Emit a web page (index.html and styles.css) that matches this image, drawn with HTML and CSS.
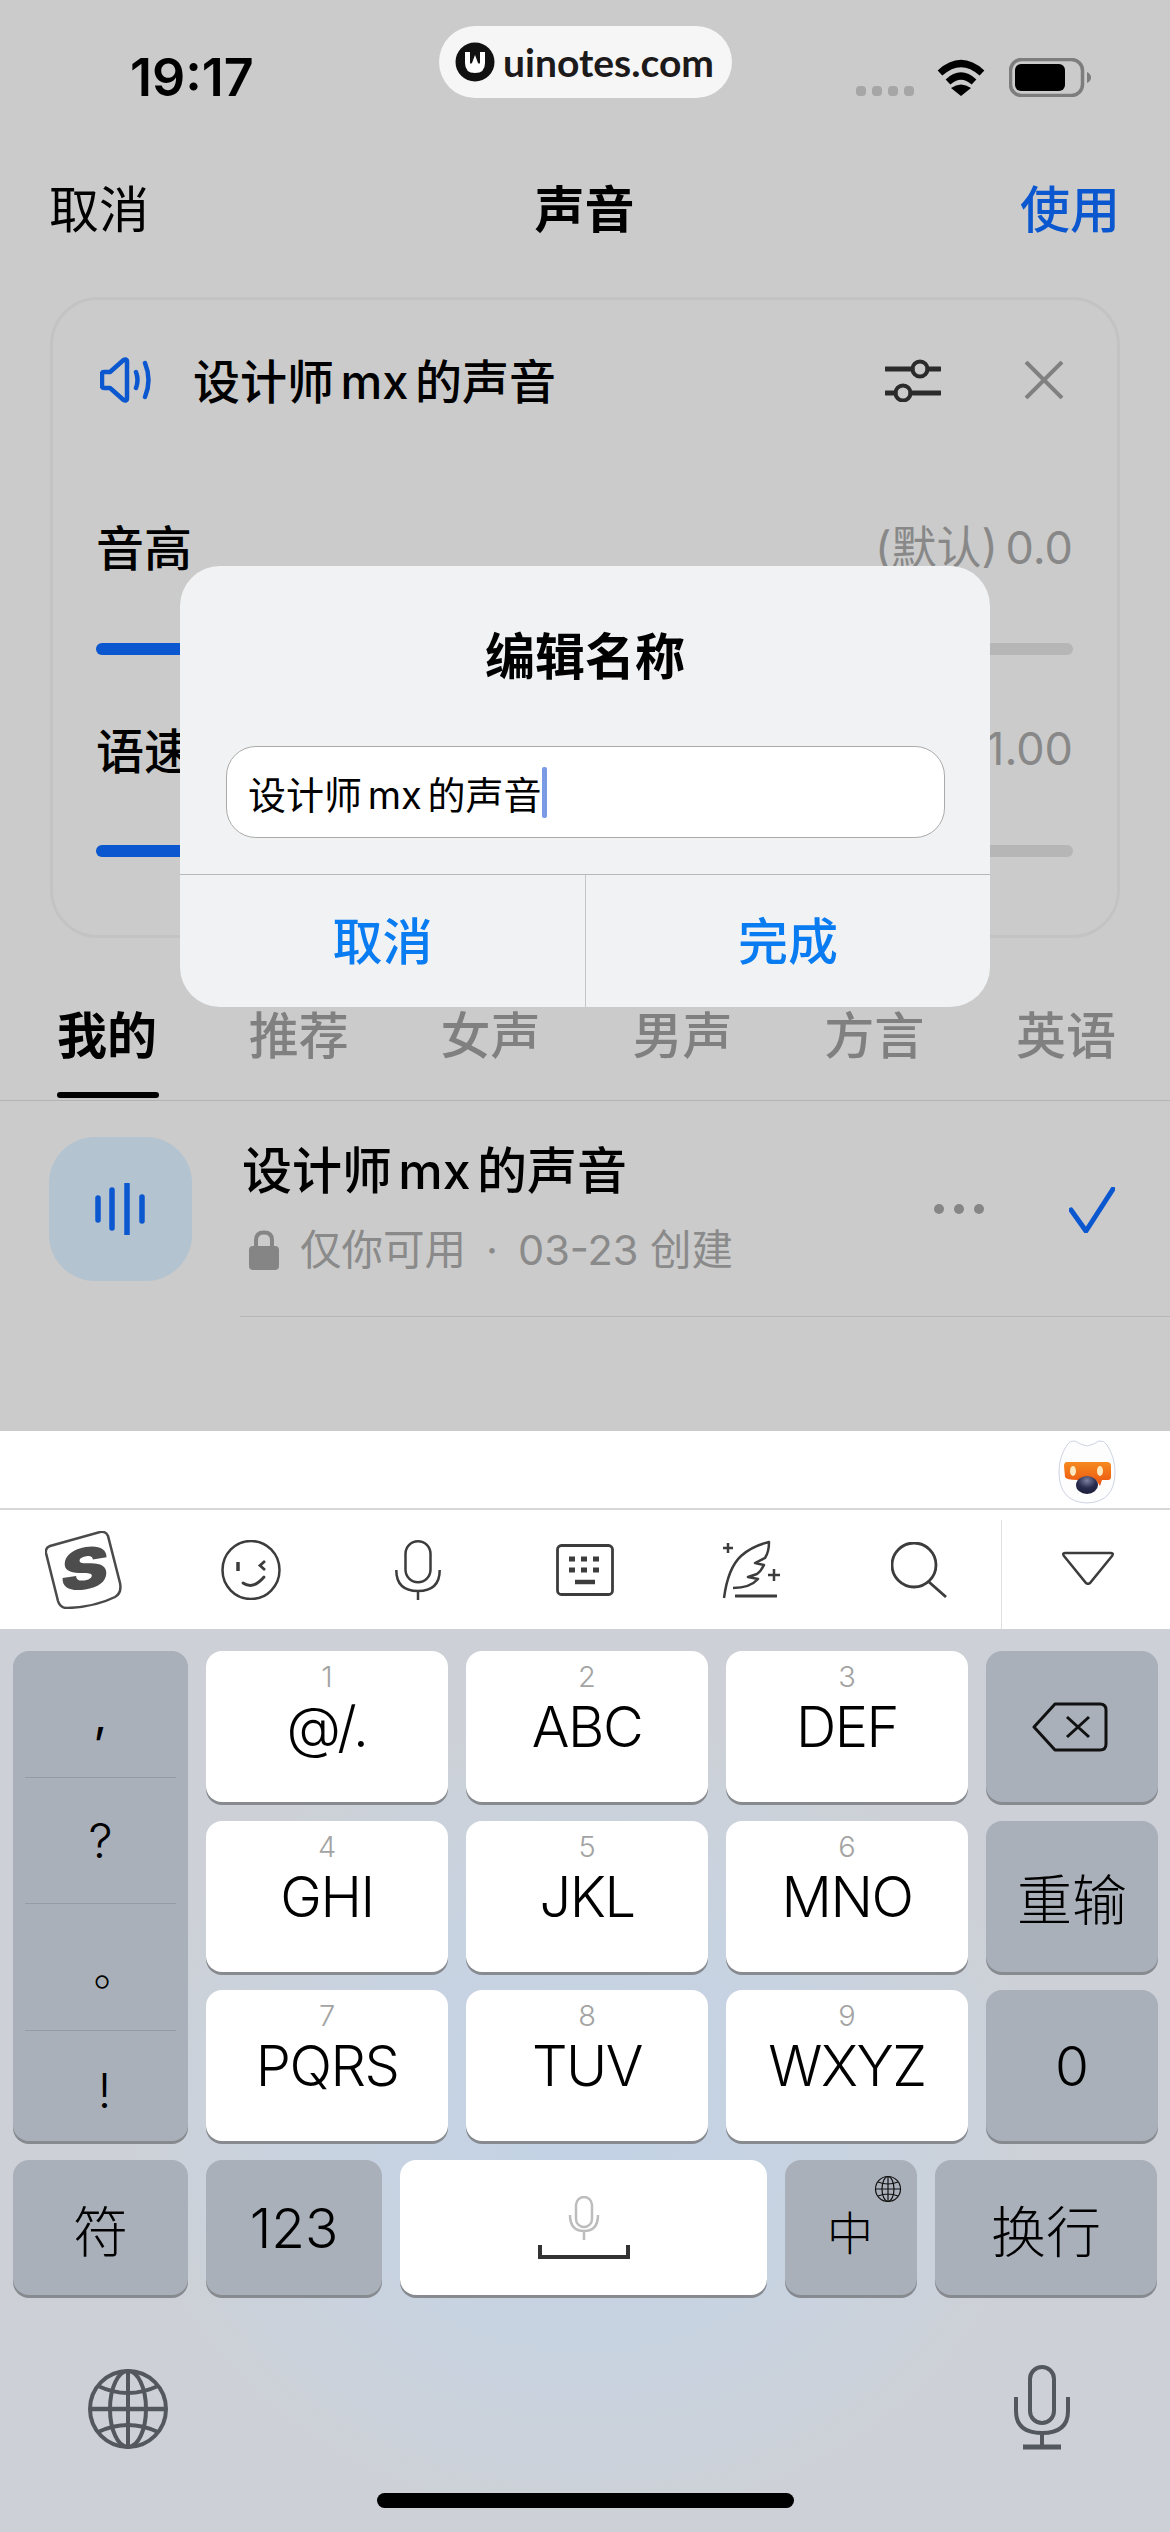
FILE: index.html
```html
<!DOCTYPE html>
<html lang="zh-CN">
<head>
    <meta charset="UTF-8">
    <meta name="viewport" content="width=device-width, initial-scale=1.0">
    <title>声音</title>
    <link rel="stylesheet" href="styles.css">
</head>
<body>
<div class="screen">

    <!-- Watermark pill -->
    <div class="pill">
        <svg class="pill-logo" viewBox="0 0 40 40">
            <circle cx="20" cy="20" r="19.5" fill="#111"/>
            <path d="M10 10 H15 V20 Q15 23 17 21 L20 13 L23 21 Q25 23 25 20 V10 H30 V21 Q30 31 20 31 Q10 31 10 21 Z" fill="#fff"/>
        </svg>
        <span class="pill-text">uinotes.com</span>
    </div>

    <!-- Status bar -->
    <div class="status">
        <span class="time">19:17</span>
        <div class="status-icons">
            <div class="signal"><i></i><i></i><i></i><i></i></div>
            <svg class="wifi" viewBox="0 0 50 37">
                <path d="M4 14 Q25 -5 46 14" fill="none" stroke="#000" stroke-width="7"/>
                <path d="M12 23 Q25 11 38 23" fill="none" stroke="#000" stroke-width="7"/>
                <path d="M25 37 L15 29 Q25 22 35 29 Z" fill="#000"/>
            </svg>
            <svg class="battery" viewBox="0 0 82 39">
                <rect x="1.5" y="1.5" width="72" height="36" rx="11" fill="none" stroke="#7d7d7d" stroke-width="3.5"/>
                <rect x="6" y="6" width="50" height="27" rx="6" fill="#000"/>
                <path d="M78 14 Q82 16 82 19.5 Q82 23 78 25 Z" fill="#7d7d7d"/>
            </svg>
        </div>
    </div>

    <!-- Nav bar -->
    <div class="nav">
        <span>取消</span>
        <span class="nav-title">声音</span>
        <span class="nav-use">使用</span>
    </div>

    <!-- Current voice card -->
    <div class="voice-card">
        <div class="card-head">
            <svg class="icon-speaker" viewBox="0 0 52 46">
                <path d="M4 15 H10 L23 3.5 Q27 1 27 5 V41 Q27 45 23 42.5 L10 31 H4 Q2 31 2 29 V17 Q2 15 4 15 Z" fill="none" stroke="#0b57cf" stroke-width="4.5" stroke-linejoin="round"/>
                <path d="M36 15 Q39 23 36 31 M45 6 Q52 23 45 40" fill="none" stroke="#0b57cf" stroke-width="4.5" stroke-linecap="round"/>
            </svg>
            <span class="card-name">设计师 mx 的声音</span>
            <svg class="icon-tune" viewBox="0 0 56 44">
                <path d="M1 11 H27 M43 11 H55 M1 35 H10 M26 35 H55" stroke="#2b2b2b" stroke-width="5" stroke-linecap="round"/>
                <circle cx="35" cy="11" r="7.5" fill="none" stroke="#2b2b2b" stroke-width="4"/>
                <circle cx="18" cy="35" r="7.5" fill="none" stroke="#2b2b2b" stroke-width="4"/>
            </svg>
            <svg class="icon-close" viewBox="0 0 40 38">
                <path d="M2 1 L38 37 M38 1 L2 37" stroke="#808080" stroke-width="4"/>
            </svg>
        </div>
        <div class="param param-first">
            <span>音高</span>
            <span class="param-value">(默认) 0.0</span>
        </div>
        <div class="track"><div class="track-fill"></div></div>
        <div class="param">
            <span>语速</span>
            <span class="param-value">1.00</span>
        </div>
        <div class="track"><div class="track-fill"></div></div>
    </div>

    <!-- Tabs -->
    <div class="tabs">
        <span class="tab tab-active">我的</span>
        <span class="tab">推荐</span>
        <span class="tab">女声</span>
        <span class="tab">男声</span>
        <span class="tab">方言</span>
        <span class="tab">英语</span>
    </div>

    <!-- Voice list -->
    <div class="voice-row">
        <div class="voice-thumb">
            <svg class="icon-wave" viewBox="0 0 52 52">
                <path d="M3 15 V37 M17 7 V45 M32 1 V51 M47 14 V38" stroke="#0b57cf" stroke-width="5.5" stroke-linecap="round"/>
            </svg>
        </div>
        <div class="voice-info">
            <div class="voice-name">设计师 mx 的声音</div>
            <div class="voice-sub">
                <svg class="icon-lock" viewBox="0 0 30 40">
                    <path d="M7 18 V10 Q7 2.500 15 2.500 Q23 2.500 23 10 V18" fill="none" stroke="#858585" stroke-width="4"/>
                    <rect x="0" y="16" width="30" height="24" rx="4" fill="#858585"/>
                </svg>
                <span>仅你可用<span class="sub-dot">·</span>03-23 创建</span>
            </div>
        </div>
        <div class="voice-more"><i></i><i></i><i></i></div>
        <svg class="icon-check" viewBox="0 0 46 46">
            <path d="M2 23 L17 44 L44 2" fill="none" stroke="#0b57cf" stroke-width="5" stroke-linecap="round" stroke-linejoin="round"/>
        </svg>
    </div>
    <div class="row-line"></div>

    <!-- Keyboard -->
    <div class="keyboard">
        <div class="kb-top">
            <svg class="mascot" viewBox="0 0 58 64">
                <defs>
                    <linearGradient id="band" x1="0" y1="0" x2="0" y2="1">
                        <stop offset="0" stop-color="#f58a1f"/>
                        <stop offset="1" stop-color="#ec5310"/>
                    </linearGradient>
                    <radialGradient id="nose" cx="0.5" cy="0.25" r="0.7">
                        <stop offset="0" stop-color="#7d80a0"/>
                        <stop offset="0.6" stop-color="#2a2c4e"/>
                        <stop offset="1" stop-color="#1d1f3c"/>
                    </radialGradient>
                </defs>
                <path d="M29 6 Q35 5 41 1 Q46 0 49 5 Q57 17 57 32 Q57 62 29 63 Q1 62 1 32 Q1 17 9 5 Q12 0 17 1 Q23 5 29 6 Z" fill="#fdfdfe" stroke="#cfd4e2" stroke-width="1"/>
                <path d="M9 22 H49 Q53 22 53 26 V37 Q53 40 50 40 L44 40 L42 46 L38 40 H20 Q8 40 7 37 L6 26 Q6 22 9 22 Z" fill="url(#band)"/>
                <ellipse cx="15" cy="31" rx="3" ry="5" fill="#fde9c0"/>
                <ellipse cx="42" cy="31" rx="3" ry="5" fill="#fde9c0"/>
                <ellipse cx="29" cy="45" rx="11" ry="9" fill="url(#nose)"/>
            </svg>
        </div>
        <div class="kb-tools">
            <div class="tool">
                <svg class="tool-s" viewBox="0 0 78 78">
                    <path d="M5 15 L55 1 Q61 0 63 5 L75 52 Q77 62 70 66 Q50 76 22 77 Q15 77 13 70 L1 22 Q0 17 5 15 Z" fill="#fff" stroke="#4a4a4a" stroke-width="2.500"/>
                    <text class="tool-s-letter" transform="rotate(-9 39 39) translate(39 58) scale(1.3 1)">S</text>
                </svg>
            </div>
            <div class="tool">
                <svg class="tool-icon" viewBox="0 0 60 60">
                    <ellipse cx="30" cy="30" rx="28.500" ry="29" fill="none" stroke="#3c3c3c" stroke-width="2.500"/>
                    <path d="M17 22 V31" stroke="#3c3c3c" stroke-width="3.500"/>
                    <path d="M44 21 L39 25.500 L44 30" fill="none" stroke="#3c3c3c" stroke-width="2.800"/>
                    <path d="M22 43 Q32 50 43 37" fill="none" stroke="#3c3c3c" stroke-width="2.800" stroke-linecap="round"/>
                </svg>
            </div>
            <div class="tool">
                <svg class="tool-mic" viewBox="0 0 46 60">
                    <rect x="10.500" y="1.300" width="25" height="41" rx="12.500" fill="none" stroke="#3c3c3c" stroke-width="2.500"/>
                    <path d="M1.300 30 Q1.300 51 23 51 Q44.700 51 44.700 30 M23 51 V60" fill="none" stroke="#3c3c3c" stroke-width="2.500"/>
                </svg>
            </div>
            <div class="tool">
                <svg class="tool-kb" viewBox="0 0 58 52">
                    <rect x="1.500" y="1.500" width="55" height="49" rx="4" fill="none" stroke="#3c3c3c" stroke-width="2.800"/>
                    <path d="M13 15 H19 M25 15 H31 M37 15 H43 M13 26 H19 M25 26 H31 M37 26 H43" stroke="#3c3c3c" stroke-width="5"/>
                    <path d="M19 38 H39" stroke="#3c3c3c" stroke-width="4.500"/>
                </svg>
            </div>
            <div class="tool">
                <svg class="tool-icon" viewBox="0 0 60 60">
                    <path d="M2 58 Q6 28 19 16 Q30 6 47 2 Q47 12 43 18 L33 23 L42 25 Q39 31 35 34 L26 37 L36 39 Q28 48 11 48" fill="none" stroke="#3c3c3c" stroke-width="2.500" stroke-linejoin="round"/>
                    <path d="M6 3 V13 M1 8 H11 M52 29 V41 M46 35 H58" stroke="#3c3c3c" stroke-width="2.500"/>
                    <path d="M13 56 H55" stroke="#3c3c3c" stroke-width="2.800"/>
                </svg>
            </div>
            <div class="tool">
                <svg class="tool-search" viewBox="0 0 56 56">
                    <circle cx="23" cy="23" r="22" fill="none" stroke="#3c3c3c" stroke-width="2.800"/>
                    <path d="M38 40 L55 55" stroke="#3c3c3c" stroke-width="2.800"/>
                </svg>
            </div>
            <div class="tool tool-last">
                <svg class="tool-down" viewBox="0 0 54 34">
                    <path d="M4 2 H50 Q53 2 51 5 L29 32 Q27 33.500 25 32 L3 5 Q1 2 4 2 Z" fill="none" stroke="#3c3c3c" stroke-width="2.500"/>
                </svg>
            </div>
        </div>

        <div class="kb-keys">
            <div class="key key-gray key-punct">
                <span class="punct punct-comma">,</span>
                <span class="punct">?</span>
                <span class="punct punct-stop">。</span>
                <span class="punct punct-bang">!</span>
            </div>
            <div class="key"><span class="key-num">1</span><span class="key-label">@/.</span></div>
            <div class="key"><span class="key-num">2</span><span class="key-label">ABC</span></div>
            <div class="key"><span class="key-num">3</span><span class="key-label">DEF</span></div>
            <div class="key key-gray key-center">
                <svg class="icon-back" viewBox="0 0 76 50">
                    <path d="M23 2 H68 Q74 2 74 8 V42 Q74 48 68 48 H23 L2 25 Z" fill="none" stroke="#111" stroke-width="3" stroke-linejoin="round"/>
                    <path d="M35 15 L57 35 M57 15 L35 35" stroke="#111" stroke-width="3"/>
                </svg>
            </div>
            <div class="key"><span class="key-num">4</span><span class="key-label">GHI</span></div>
            <div class="key"><span class="key-num">5</span><span class="key-label">JKL</span></div>
            <div class="key"><span class="key-num">6</span><span class="key-label">MNO</span></div>
            <div class="key key-gray key-center key-text">重输</div>
            <div class="key"><span class="key-num">7</span><span class="key-label">PQRS</span></div>
            <div class="key"><span class="key-num">8</span><span class="key-label">TUV</span></div>
            <div class="key"><span class="key-num">9</span><span class="key-label">WXYZ</span></div>
            <div class="key key-gray key-center key-text">0</div>
        </div>

        <div class="kb-bottom">
            <div class="key key-gray key-center key-text w-sym">符</div>
            <div class="key key-gray key-center key-text w-num">123</div>
            <div class="key key-center w-space">
                <svg class="space-mic" viewBox="0 0 32 44">
                    <rect x="8" y="1" width="16" height="30" rx="8" fill="none" stroke="#bdbdbd" stroke-width="2.500"/>
                    <path d="M2 19 Q2 35 16 35 Q30 35 30 19 M16 35 V44" fill="none" stroke="#bdbdbd" stroke-width="2.500"/>
                </svg>
                <svg class="space-bar" viewBox="0 0 92 14">
                    <path d="M2 0 V12 H90 V0" fill="none" stroke="#333" stroke-width="4"/>
                </svg>
            </div>
            <div class="key key-gray key-center key-zh w-zh">
                <svg class="zh-globe" viewBox="0 0 28 28">
                    <circle cx="14" cy="14" r="12.500" fill="none" stroke="#111" stroke-width="1.200"/>
                    <ellipse cx="14" cy="14" rx="6" ry="12.500" fill="none" stroke="#111" stroke-width="1.200"/>
                    <path d="M14 1.500 V26.500 M1.500 14 H26.500 M4 7 Q14 11 24 7 M4 21 Q14 17 24 21" fill="none" stroke="#111" stroke-width="1.200"/>
                </svg>
                <span>中</span>
            </div>
            <div class="key key-gray key-center key-text w-ret">换行</div>
        </div>

        <div class="kb-system">
            <svg class="sys-globe" viewBox="0 0 80 80">
                <circle cx="40" cy="40" r="38" fill="none" stroke="#53585f" stroke-width="4"/>
                <ellipse cx="40" cy="40" rx="18" ry="38" fill="none" stroke="#53585f" stroke-width="4"/>
                <path d="M40 2 V78" stroke="#53585f" stroke-width="4"/>
                <path d="M2 40 H78" stroke="#53585f" stroke-width="4.500"/>
                <path d="M10 17 Q40 31 70 17 M10 63 Q40 49 70 63" fill="none" stroke="#53585f" stroke-width="4"/>
            </svg>
            <svg class="sys-mic" viewBox="0 0 56 85">
                <rect x="16" y="2" width="24" height="56" rx="12" fill="none" stroke="#53585f" stroke-width="4"/>
                <path d="M2 32 V46 Q2 68 28 68 Q54 68 54 46 V32 M28 68 V80" fill="none" stroke="#53585f" stroke-width="4"/>
                <path d="M9 82 H47" stroke="#53585f" stroke-width="5"/>
            </svg>
        </div>
        <div class="home-bar"></div>
    </div>

    <!-- Edit name dialog -->
    <div class="dialog">
        <div class="dialog-title">编辑名称</div>
        <div class="dialog-input"><span>设计师 mx 的声音</span><i class="caret"></i></div>
        <div class="dialog-actions">
            <span>取消</span>
            <span>完成</span>
        </div>
    </div>
</div>
</body>
</html>
```
FILE: styles.css
```css
* {
    box-sizing: border-box;
}

body {
    margin: 0;
    font-family: Inter, "Noto Sans CJK SC", sans-serif;
    color: #000;
}

.screen {
    position: relative;
    width: 1170px;
    height: 2532px;
    overflow: hidden;
    display: flex;
    flex-direction: column;
    background-color: #cbcbcb;
}

/* watermark */
.pill {
    position: absolute;
    left: 439px;
    top: 26px;
    width: 293px;
    height: 72px;
    padding-left: 16px;
    display: flex;
    align-items: center;
    gap: 8px;
    border-radius: 36px;
    background-color: #f6f6f6;
}

.pill-logo {
    width: 40px;
    height: 40px;
}

.pill-text {
    font-family: Lato, sans-serif;
    font-size: 39px;
    font-weight: 700;
    color: #1c1a1a;
}

/* status bar */
.status {
    height: 160px;
    padding: 54px 79px 0 130px;
    display: flex;
    justify-content: space-between;
    align-items: flex-start;
}

.time {
    font-size: 52px;
    font-weight: 600;
    line-height: 48px;
}

.status-icons {
    display: flex;
    align-items: flex-start;
    margin-top: 4px;
}

.signal {
    display: flex;
    gap: 6px;
    margin-top: 28px;
    margin-right: 22px;
}

.signal i {
    width: 10px;
    height: 10px;
    border-radius: 4px;
    background-color: #a6a6a6;
}

.wifi {
    width: 50px;
    height: 37px;
    margin-top: 1px;
    margin-right: 23px;
}

.battery {
    width: 82px;
    height: 39px;
}

/* nav */
.nav {
    height: 96px;
    padding: 0 50px 5px 49px;
    display: flex;
    justify-content: space-between;
    align-items: center;
    font-size: 50px;
}

.nav-title {
    font-weight: 700;
}

.nav-use {
    color: #0b57cf;
    font-weight: 500;
}

/* voice card */
.voice-card {
    height: 641px;
    margin: 41px 50px 0;
    padding: 56px 44px 0 43px;
    border: 3px solid #c3c3c3;
    border-radius: 48px;
}

.card-head {
    height: 48px;
    display: flex;
    align-items: center;
}

.icon-speaker {
    width: 52px;
    height: 46px;
    margin-left: 4px;
    margin-right: 41px;
}

.card-name {
    flex: 1;
    margin-top: -3px;
    font-size: 47px;
    font-weight: 500;
    word-spacing: -6px;
}

.icon-tune {
    width: 56px;
    height: 44px;
    margin-right: 83px;
}

.icon-close {
    width: 40px;
    height: 38px;
    margin-right: 9px;
}

.param {
    height: 48px;
    margin-top: 70px;
    padding-bottom: 2px;
    display: flex;
    justify-content: space-between;
    align-items: center;
    font-size: 48px;
    font-weight: 500;
}

.param-first {
    margin-top: 119px;
    padding-bottom: 5px;
}

.param-value {
    font-size: 45px;
    font-weight: 400;
    word-spacing: -5px;
    color: #888;
}

.track {
    height: 12px;
    margin-top: 72px;
    border-radius: 6px;
    background-color: #b6b6b6;
}

.track-fill {
    width: 40%;
    height: 100%;
    border-radius: 6px;
    background-color: #0b57cf;
}

/* tabs */
.tabs {
    height: 163px;
    padding: 74px 54px 0 57px;
    display: flex;
    justify-content: space-between;
    align-items: flex-start;
    border-bottom: 1px solid #b4b4b4;
}

.tab {
    position: relative;
    font-size: 50px;
    line-height: 48px;
    font-weight: 500;
    color: #808080;
}

.tab-active {
    font-weight: 700;
    color: #000;
}

.tab-active::after {
    content: "";
    position: absolute;
    left: 0;
    right: -2px;
    top: 80px;
    height: 6px;
    border-radius: 3px;
    background-color: #000;
}

/* list */
.voice-row {
    height: 215px;
    padding: 36px 55px 0 49px;
    display: flex;
    align-items: flex-start;
}

.voice-thumb {
    width: 143px;
    height: 144px;
    margin-right: 50px;
    display: flex;
    align-items: center;
    justify-content: center;
    border-radius: 46px;
    background-color: #b4c3d0;
}

.icon-wave {
    width: 52px;
    height: 52px;
}

.voice-info {
    flex: 1;
}

.voice-name {
    margin-top: 10px;
    font-size: 50px;
    line-height: 48px;
    font-weight: 500;
    word-spacing: -7px;
}

.voice-sub {
    margin-top: 33px;
    display: flex;
    align-items: center;
    gap: 21px;
    font-size: 41.5px;
    line-height: 44px;
    color: #8a8a8a;
}

.sub-dot {
    margin: 0 20px;
}

.icon-lock {
    width: 30px;
    height: 40px;
    margin-left: 7px;
}

.voice-more {
    display: flex;
    gap: 10px;
    margin-top: 67px;
    margin-right: 85px;
}

.voice-more i {
    width: 10px;
    height: 10px;
    border-radius: 50%;
    background-color: #868686;
}

.icon-check {
    width: 46px;
    height: 46px;
    margin-top: 50px;
}

.row-line {
    height: 1px;
    margin-left: 240px;
    background-color: #b6b6b6;
}

/* keyboard */
.keyboard {
    position: relative;
    height: 1101px;
    margin-top: auto;
    background:
        radial-gradient(ellipse 460px 400px at 585px 690px, #c2d2e5 0%, #c8d3e1 55%, rgba(205, 210, 218, 0) 100%),
        #cdd1d7;
}

.kb-top {
    height: 79px;
    padding-right: 54px;
    display: flex;
    justify-content: flex-end;
    align-items: flex-start;
    background-color: #fff;
    border-bottom: 2px solid #d6d7d9;
}

.mascot {
    width: 58px;
    height: 64px;
    margin-top: 9px;
}

.kb-tools {
    height: 119px;
    display: flex;
    background-color: #fff;
}

.tool {
    flex: 1;
    display: flex;
    align-items: center;
    justify-content: center;
}

.tool-last {
    position: relative;
    flex: 1;
}

.tool-last::before {
    content: "";
    position: absolute;
    left: -2px;
    top: 10px;
    bottom: 0;
    width: 1px;
    background-color: #e0e0e0;
}

.tool-s {
    width: 78px;
    height: 78px;
}

.tool-s-letter {
    font-family: Inter, sans-serif;
    font-size: 56px;
    font-weight: 900;
    font-style: italic;
    fill: #4d4d4d;
    text-anchor: middle;
}

.tool-icon {
    width: 60px;
    height: 60px;
}

.tool-mic {
    width: 46px;
    height: 60px;
}

.tool-kb {
    width: 58px;
    height: 52px;
}

.tool-search {
    width: 56px;
    height: 56px;
}

.tool-down {
    width: 54px;
    height: 34px;
    margin-left: 3px;
    margin-bottom: 3px;
}

.kb-keys {
    padding: 22px 13px 0;
    display: grid;
    grid-template-columns: 175px 242px 242px 242px 172px;
    grid-template-rows: 151px 151px 151px;
    column-gap: 18px;
    row-gap: 18.5px;
}

.key {
    position: relative;
    display: flex;
    flex-direction: column;
    align-items: center;
    border-radius: 16px;
    background-color: #fff;
    box-shadow: 0 3px 0 #878a8f;
}

.key-gray {
    background-color: #a9b0ba;
}

.key-center {
    justify-content: center;
}

.key-text {
    font-size: 55px;
    font-weight: 300;
}

.key-num {
    margin-top: 10px;
    font-size: 29px;
    line-height: 32px;
    font-weight: 300;
    color: #a3a3a3;
}

.key-label {
    margin-top: 2px;
    font-size: 56px;
    line-height: 64px;
    font-weight: 300;
    letter-spacing: -1.500px;
}

.key-punct {
    grid-row: 1 / span 3;
    padding: 0 12px;
}

.punct {
    width: 100%;
    height: 127px;
    display: flex;
    align-items: center;
    justify-content: center;
    font-size: 48px;
    font-weight: 300;
    border-bottom: 1px solid #959ba5;
}

.punct-comma {
    padding-top: 2px;
    font-weight: 400;
}

.punct-stop {
    padding-left: 30px;
    font-size: 44px;
}

.punct-bang {
    height: 110px;
    padding-left: 8px;
    padding-top: 8px;
    border-bottom: none;
}

.icon-back {
    width: 76px;
    height: 50px;
    margin-left: -4px;
}

.kb-bottom {
    margin-top: 19px;
    padding: 0 13px;
    display: flex;
    gap: 18px;
}

.kb-bottom .key {
    height: 135px;
}

.w-sym {
    width: 175px;
}

.w-num {
    width: 176px;
}

.w-space {
    width: 367px;
}

.w-zh {
    width: 132px;
}

.w-ret {
    width: 222px;
}

.space-mic {
    width: 32px;
    height: 44px;
}

.space-bar {
    width: 92px;
    height: 14px;
    margin-top: 5px;
}

.key-zh {
    font-size: 46px;
    font-weight: 300;
}

.key-zh span {
    padding-top: 4px;
    padding-right: 2px;
}

.zh-globe {
    position: absolute;
    right: 15px;
    top: 15px;
    width: 28px;
    height: 28px;
}

.kb-system {
    padding: 70px 100px 0 88px;
    display: flex;
    justify-content: space-between;
    align-items: flex-start;
}

.sys-globe {
    width: 80px;
    height: 80px;
    margin-top: 4px;
}

.sys-mic {
    width: 56px;
    height: 85px;
}

.home-bar {
    position: absolute;
    left: 377px;
    bottom: 24px;
    width: 417px;
    height: 15px;
    border-radius: 8px;
    background-color: #000;
}

/* dialog */
.dialog {
    position: absolute;
    left: 180px;
    top: 566px;
    width: 810px;
    height: 441px;
    padding-top: 66px;
    display: flex;
    flex-direction: column;
    border-radius: 40px;
    background-color: #f1f2f3;
}

.dialog-title {
    text-align: center;
    font-size: 50px;
    line-height: 50px;
    font-weight: 700;
}

.dialog-input {
    height: 92px;
    margin: 64px 45px 0 46px;
    padding-left: 21px;
    display: flex;
    align-items: center;
    font-size: 38px;
    word-spacing: -5px;
    border: 1.5px solid #aaa;
    border-radius: 30px;
    background-color: #fff;
}

.caret {
    width: 5px;
    height: 51px;
    margin-left: 1px;
    border-radius: 2px;
    background-color: #7a9ae6;
}

.dialog-actions {
    flex: 1;
    margin-top: 36px;
    display: grid;
    grid-template-columns: 1fr 1fr;
    border-top: 1.5px solid #b8b8ba;
    font-size: 50px;
    font-weight: 500;
    color: #0a7cf2;
}

.dialog-actions span {
    display: flex;
    align-items: center;
    justify-content: center;
    padding-bottom: 6px;
}

.dialog-actions span + span {
    border-left: 1px solid #c6c6c8;
}
```
